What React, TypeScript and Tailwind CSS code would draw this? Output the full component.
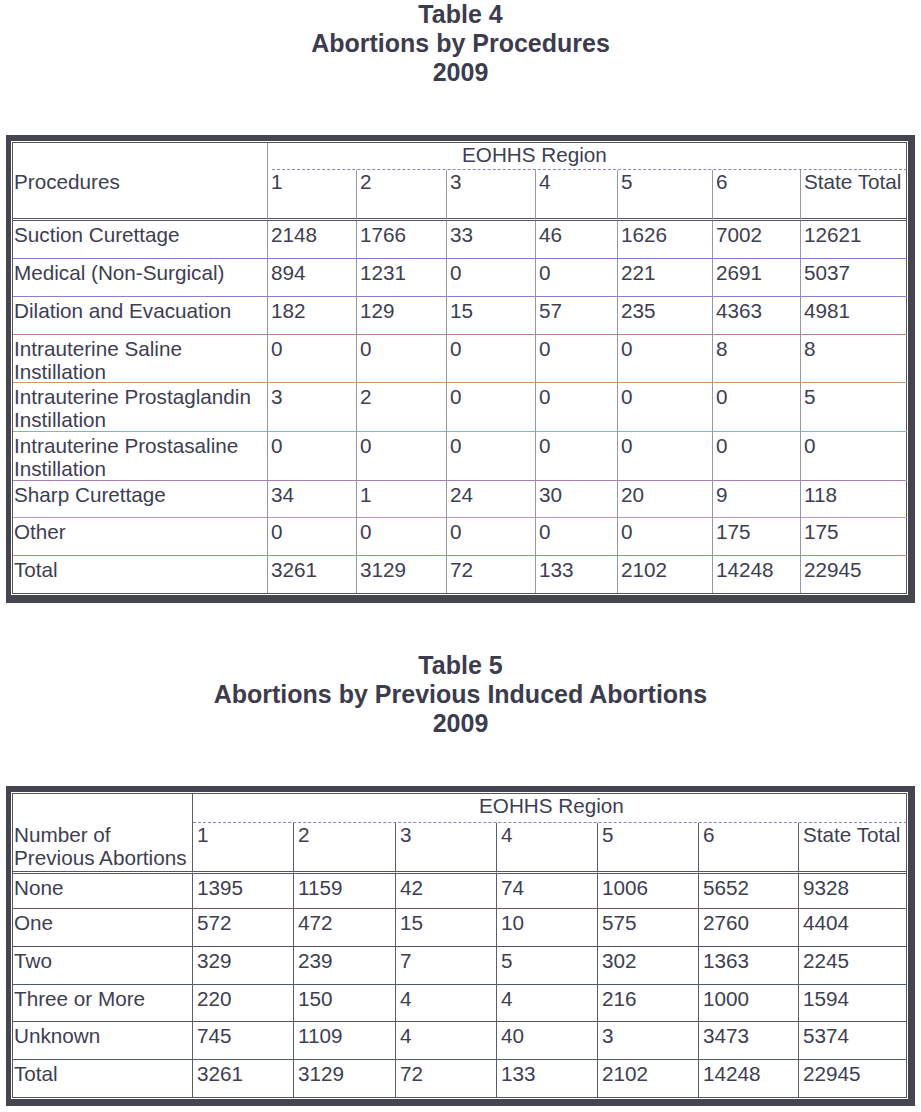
import React from "react";

type Row = { label: React.ReactNode; values: string[]; h: string; line: string };

const ink = "text-[#3e3e52]";

const table4Rows: Row[] = [
  { label: "Suction Curettage", values: ["2148", "1766", "33", "46", "1626", "7002", "12621"], h: "h-[38px]", line: "border-b-[#8478c8]" },
  { label: "Medical (Non-Surgical)", values: ["894", "1231", "0", "0", "221", "2691", "5037"], h: "h-[38px]", line: "border-b-[#8c7ed4]" },
  { label: "Dilation and Evacuation", values: ["182", "129", "15", "57", "235", "4363", "4981"], h: "h-[38px]", line: "border-b-[#b8828a]" },
  { label: <>Intrauterine Saline<br />Instillation</>, values: ["0", "0", "0", "0", "0", "8", "8"], h: "h-[48px]", line: "border-b-[#c89a6a]" },
  { label: <>Intrauterine Prostaglandin<br />Instillation</>, values: ["3", "2", "0", "0", "0", "0", "5"], h: "h-[49px]", line: "border-b-[#78b4dc]" },
  { label: <>Intrauterine Prostasaline<br />Instillation</>, values: ["0", "0", "0", "0", "0", "0", "0"], h: "h-[49px]", line: "border-b-[#a880b4]" },
  { label: "Sharp Curettage", values: ["34", "1", "24", "30", "20", "9", "118"], h: "h-[37px]", line: "border-b-[#c8a464]" },
  { label: "Other", values: ["0", "0", "0", "0", "0", "175", "175"], h: "h-[38px]", line: "border-b-[#c08a72]" },
  { label: "Total", values: ["3261", "3129", "72", "133", "2102", "14248", "22945"], h: "h-[37px]", line: "" },
];

const table5Rows: Row[] = [
  { label: "None", values: ["1395", "1159", "42", "74", "1006", "5652", "9328"], h: "h-[35px]", line: "border-b-[#6a5a5a]" },
  { label: "One", values: ["572", "472", "15", "10", "575", "2760", "4404"], h: "h-[38px]", line: "border-b-[#5a4e6e]" },
  { label: "Two", values: ["329", "239", "7", "5", "302", "1363", "2245"], h: "h-[38px]", line: "border-b-[#4e5a6a]" },
  { label: "Three or More", values: ["220", "150", "4", "4", "216", "1000", "1594"], h: "h-[37px]", line: "border-b-[#6a4e5e]" },
  { label: "Unknown", values: ["745", "1109", "4", "40", "3", "3473", "5374"], h: "h-[38px]", line: "border-b-[#4e5e74]" },
  { label: "Total", values: ["3261", "3129", "72", "133", "2102", "14248", "22945"], h: "h-[37px]", line: "" },
];

const cols = ["1", "2", "3", "4", "5", "6", "State Total"];

function Title({ n, sub }: { n: string; sub: string }) {
  return (
    <div className="text-center text-[25px] leading-[29px] font-bold text-[#3c3c4e]">
      <div>Table {n}</div>
      <div>{sub}</div>
      <div>2009</div>
    </div>
  );
}

function DataTable({
  grid,
  rows,
  corner,
  regionPad,
  regionText,
  topH,
  cornerPad,
  vline,
  cellPad,
  bottom,
}: {
  grid: string;
  rows: Row[];
  corner: React.ReactNode;
  regionPad: string;
  regionText: string;
  topH: string;
  cornerPad: string;
  vline: string;
  cellPad: string;
  bottom: string;
}) {
  return (
    <div className={`border-t-[6px] border-l-[5px] border-r-[7px] ${bottom} border-[#45454f] bg-white p-px`}>
      <div className={`border border-[#55555f] grid ${grid}`}>
        {/* header */}
        <div className={`row-span-2 border-r ${vline} border-b-[3px] border-double border-b-[#5a5560] pl-[1px] ${cornerPad} whitespace-nowrap`}>
          {corner}
        </div>
        <div className={`col-span-7 ${topH} ${regionPad}`}>
          <div className={`h-full border-b border-dashed border-[#8f80c0] ${regionText}`}>EOHHS Region</div>
        </div>
        {cols.map((c, i) => (
          <div
            key={c}
            className={`h-[51px] border-b-[3px] border-double border-b-[#5a5560] ${cellPad} whitespace-nowrap ${i < 6 ? `border-r ${vline}` : ""}`}
          >
            {c}
          </div>
        ))}
        {/* body */}
        {rows.map((r, ri) => {
          const last = ri === rows.length - 1;
          const hb = last ? "" : `border-b ${r.line}`;
          return (
            <React.Fragment key={ri}>
              <div className={`${r.h} ${hb} border-r ${vline} pl-[1px] pt-[2px] whitespace-nowrap`}>{r.label}</div>
              {r.values.map((v, vi) => (
                <div key={vi} className={`${r.h} ${hb} ${vi < 6 ? `border-r ${vline}` : ""} ${cellPad} pt-[2px]`}>
                  {v}
                </div>
              ))}
            </React.Fragment>
          );
        })}
      </div>
    </div>
  );
}

export default function App() {
  return (
    <div className={`w-[921px] h-[1112px] bg-white px-[6px] font-['Liberation_Sans',Arial,sans-serif] ${ink} text-[20.7px] leading-[23px] overflow-hidden`}>
      <Title n="4" sub="Abortions by Procedures" />
      <div className="mt-[48px]">
        <DataTable
          grid="grid-cols-[255px_89px_90px_89px_82px_95px_88px_106px]"
          rows={table4Rows}
          corner="Procedures"
          regionPad="pl-[4px]"
          regionText="pl-[190px]"
          topH="h-[27px]"
          cornerPad="pt-[27px]"
          vline="border-r-[#9696a6]"
          cellPad="pl-[3px]"
          bottom="border-b-[8px]"
        />
      </div>
      <div className="mt-[48px]">
        <Title n="5" sub="Abortions by Previous Induced Abortions" />
      </div>
      <div className="mt-[48px]">
        <DataTable
          grid="grid-cols-[180px_101px_102px_101px_101px_101px_100px_108px]"
          rows={table5Rows}
          corner={<>Number of<br />Previous Abortions</>}
          regionPad=""
          regionText="pl-[286px]"
          topH="h-[29px]"
          cornerPad="pt-[29px]"
          vline="border-r-[#5c5c68]"
          cellPad="pl-[4px]"
          bottom="border-b-[7px]"
        />
      </div>
    </div>
  );
}
